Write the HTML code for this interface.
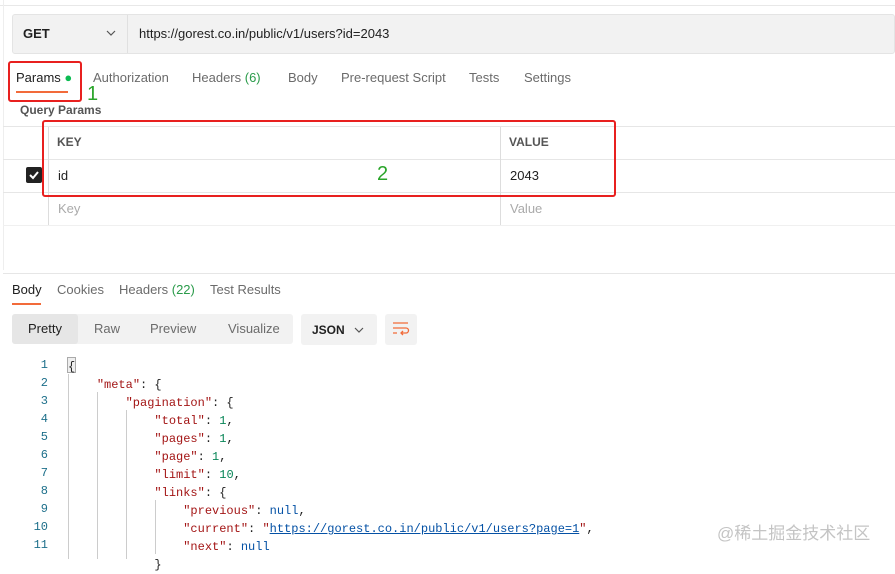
<!DOCTYPE html>
<html><head><meta charset="utf-8"><style>
*{margin:0;padding:0;box-sizing:border-box}
body{width:895px;height:559px;overflow:hidden;background:#fff;font-family:"Liberation Sans",sans-serif;font-size:13px;color:#212121;position:relative}
.a{position:absolute;white-space:nowrap}
.g{color:#6b6b6b}
.code{font-family:"Liberation Mono",monospace;font-size:12px}
.s{color:#a31515}.n{color:#098658}.k{color:#0451a5}
.l{color:#0451a5;text-decoration:underline}
.ln{position:absolute;width:40px;text-align:right;left:8px;color:#1d6f8a;font-family:"Liberation Mono",monospace;font-size:12px}
.vl{position:absolute;width:1px;background:#ddd}
</style></head><body>
<div class="a" style="left:0;top:5px;width:895px;height:1px;background:#e8e8e8"></div>
<div class="a" style="left:3px;top:0;width:1px;height:270px;background:#eee"></div>
<div class="a" style="left:12px;top:14px;width:883px;height:40px;background:#f2f2f2;border:1px solid #e4e4e4;border-radius:3px"></div>
<div class="a" style="left:127px;top:15px;width:1px;height:38px;background:#e0e0e0"></div>
<div class="a" style="left:23px;top:26px;font-weight:bold;font-size:13px">GET</div>
<svg class="a" style="left:106px;top:30px" width="10" height="7"><path d="M1 1l4 4 4-4" stroke="#555" fill="none" stroke-width="1.2"/></svg>
<div class="a" style="left:139px;top:26px">https://gorest.co.in/public/v1/users?id=2043</div>

<div class="a" style="left:16px;top:70px">Params <span style="color:#0cbb52">●</span></div>
<div class="a" style="left:16px;top:91px;width:52px;height:2px;background:#f26b3a"></div>
<div class="a" style="left:8px;top:61px;width:74px;height:41px;border:2px solid #e8201f;border-radius:3px"></div>
<div class="a" style="left:87px;top:83px;color:#2aa52a;font-size:20px">1</div>
<div class="a g" style="left:93px;top:70px">Authorization</div>
<div class="a g" style="left:192px;top:70px">Headers <span style="color:#2a9b4a">(6)</span></div>
<div class="a g" style="left:288px;top:70px">Body</div>
<div class="a g" style="left:341px;top:70px">Pre-request Script</div>
<div class="a g" style="left:469px;top:70px">Tests</div>
<div class="a g" style="left:524px;top:70px">Settings</div>
<div class="a" style="left:20px;top:103px;font-weight:bold;color:#555;font-size:12px">Query Params</div>

<div class="a" style="left:3px;top:126px;width:892px;height:1px;background:#e6e6e6"></div>
<div class="a" style="left:3px;top:159px;width:892px;height:1px;background:#e6e6e6"></div>
<div class="a" style="left:3px;top:192px;width:892px;height:1px;background:#e6e6e6"></div>
<div class="a" style="left:3px;top:225px;width:892px;height:1px;background:#f0f0f0"></div>
<div class="vl" style="left:48px;top:127px;height:98px"></div>
<div class="vl" style="left:500px;top:127px;height:98px"></div>
<div class="a" style="left:57px;top:135px;font-weight:bold;color:#555;font-size:12px">KEY</div>
<div class="a" style="left:509px;top:135px;font-weight:bold;color:#555;font-size:12px">VALUE</div>
<div class="a" style="left:26px;top:167px;width:16px;height:16px;background:#222;border-radius:2px"></div>
<svg class="a" style="left:28px;top:169px" width="12" height="12"><path d="M2 6l3 3 5-6" stroke="#fff" stroke-width="2" fill="none"/></svg>
<div class="a" style="left:58px;top:168px">id</div>
<div class="a" style="left:510px;top:168px">2043</div>
<div class="a" style="left:58px;top:201px;color:#aaa">Key</div>
<div class="a" style="left:510px;top:201px;color:#aaa">Value</div>
<div class="a" style="left:42px;top:120px;width:574px;height:77px;border:2px solid #e8201f;border-radius:3px"></div>
<div class="a" style="left:377px;top:163px;color:#2aa52a;font-size:20px">2</div>

<div class="a" style="left:3px;top:273px;width:892px;height:1px;background:#e6e6e6"></div>
<div class="a" style="left:12px;top:282px">Body</div>
<div class="a" style="left:12px;top:303px;width:29px;height:2px;background:#f26b3a"></div>
<div class="a g" style="left:57px;top:282px">Cookies</div>
<div class="a g" style="left:119px;top:282px">Headers <span style="color:#2a9b4a">(22)</span></div>
<div class="a g" style="left:210px;top:282px">Test Results</div>

<div class="a" style="left:12px;top:314px;width:281px;height:30px;background:#f2f2f2;border-radius:3px"></div>
<div class="a" style="left:12px;top:314px;width:66px;height:30px;background:#e6e6e6;border-radius:3px"></div>
<div class="a" style="left:28px;top:321px">Pretty</div>
<div class="a g" style="left:94px;top:321px">Raw</div>
<div class="a g" style="left:150px;top:321px">Preview</div>
<div class="a g" style="left:228px;top:321px">Visualize</div>
<div class="a" style="left:301px;top:314px;width:76px;height:31px;background:#f2f2f2;border-radius:3px"></div>
<div class="a" style="left:312px;top:323px;font-weight:bold;font-size:12px">JSON</div>
<svg class="a" style="left:354px;top:327px" width="10" height="7"><path d="M1 1l4 4 4-4" stroke="#555" fill="none" stroke-width="1.2"/></svg>
<div class="a" style="left:385px;top:314px;width:32px;height:31px;background:#f2f2f2;border-radius:3px"></div>
<svg class="a" style="left:392px;top:321px" width="18" height="16"><path d="M1 2h15M1 7h13a2.5 2.5 0 0 1 0 5H9M1 12h4M11 10l-2 2 2 2" stroke="#f26b3a" fill="none" stroke-width="1.3"/></svg>

<div class="ln" style="top:358px">1</div><div class="ln" style="top:376px">2</div><div class="ln" style="top:394px">3</div><div class="ln" style="top:412px">4</div><div class="ln" style="top:430px">5</div><div class="ln" style="top:448px">6</div><div class="ln" style="top:466px">7</div><div class="ln" style="top:484px">8</div><div class="ln" style="top:502px">9</div><div class="ln" style="top:520px">10</div><div class="ln" style="top:538px">11</div>
<div class="vl" style="left:68px;top:374px;height:185px;background:#ccc"></div>
<div class="vl" style="left:97px;top:392px;height:167px;background:#ccc"></div>
<div class="vl" style="left:126px;top:410px;height:149px;background:#ccc"></div>
<div class="vl" style="left:155px;top:500px;height:54px;background:#ccc"></div>
<div class="a" style="left:67px;top:357px;width:9px;height:16px;border:1px solid #aaa;background:#eee"></div>
<div class="a code" style="left:68px;top:358px;line-height:18px;white-space:pre">{
    <span class="s">"meta"</span>: {
        <span class="s">"pagination"</span>: {
            <span class="s">"total"</span>: <span class="n">1</span>,
            <span class="s">"pages"</span>: <span class="n">1</span>,
            <span class="s">"page"</span>: <span class="n">1</span>,
            <span class="s">"limit"</span>: <span class="n">10</span>,
            <span class="s">"links"</span>: {
                <span class="s">"previous"</span>: <span class="k">null</span>,
                <span class="s">"current"</span>: <span class="s">"</span><span class="l">https://gorest.co.in/public/v1/users?page=1</span><span class="s">"</span>,
                <span class="s">"next"</span>: <span class="k">null</span>
            }</div>
<div class="a" style="left:717px;top:519px;font-size:17px;color:#c4c4c4;font-family:'Liberation Sans','Noto Sans CJK SC',sans-serif">@稀土掘金技术社区</div>
</body></html>
